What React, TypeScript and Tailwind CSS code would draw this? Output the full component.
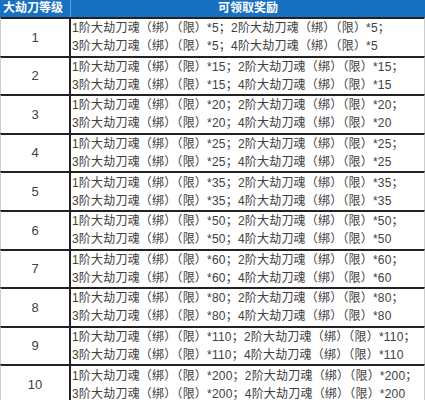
const rows = [
  { level: 1, n: 5 },
  { level: 2, n: 15 },
  { level: 3, n: 20 },
  { level: 4, n: 25 },
  { level: 5, n: 35 },
  { level: 6, n: 50 },
  { level: 7, n: 60 },
  { level: 8, n: 80 },
  { level: 9, n: 110 },
  { level: 10, n: 200 },
];

export default function App() {
  return (
    <div
      className="w-[425px] h-[400px] overflow-hidden bg-white text-[12px] text-[#404040]"
      style={{ fontFamily: '"Liberation Sans", "Noto Sans CJK SC", sans-serif' }}
    >
      {/* header */}
      <div className="flex h-[17px] bg-[#1770c0] text-white font-bold leading-[17px]">
        <div className="w-[71px] shrink-0 border-r border-[#5d9bd6] px-[3px]">大劫刀等级</div>
        <div className="flex-1 text-center">可领取奖励</div>
      </div>
      {rows.map((r) => (
        <div
          key={r.level}
          className="flex h-[38.6px] border-t-2 border-[#222] border-l border-l-[#ccc] border-r border-r-[#ccc]"
        >
          <div className="w-[70px] shrink-0 border-r-2 border-[#222] flex items-center justify-center text-[13px]">
            {r.level}
          </div>
          <div className="flex-1 pl-[1px] leading-[18px] whitespace-nowrap flex flex-col justify-center tracking-[0.2px]">
            <div>1阶大劫刀魂（绑）（限）*{r.n}；2阶大劫刀魂（绑）（限）*{r.n}；</div>
            <div>3阶大劫刀魂（绑）（限）*{r.n}；4阶大劫刀魂（绑）（限）*{r.n}</div>
          </div>
        </div>
      ))}
    </div>
  );
}
